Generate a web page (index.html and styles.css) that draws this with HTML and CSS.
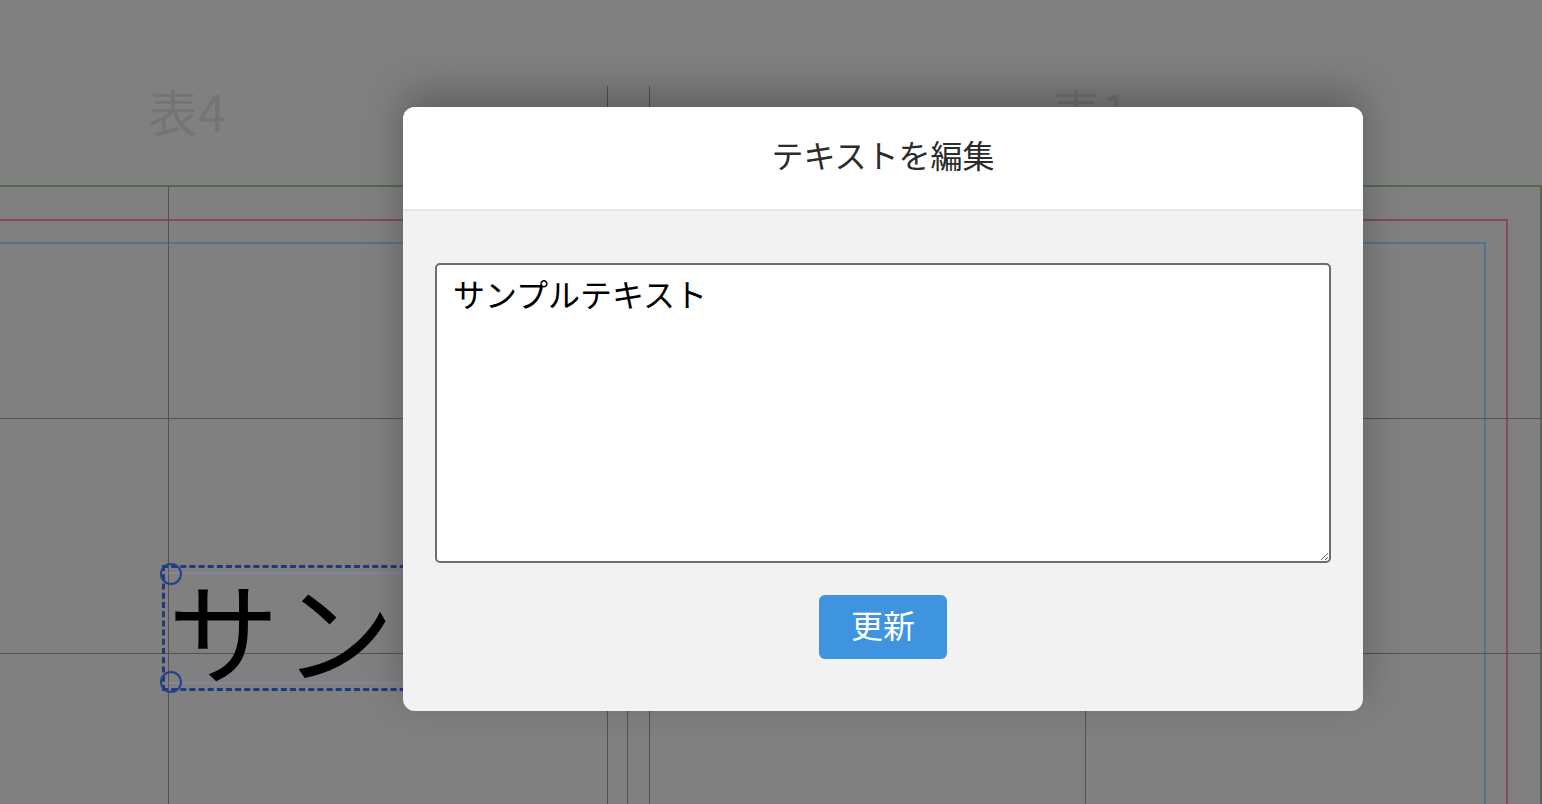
FILE: index.html
```html
<!DOCTYPE html>
<html lang="ja">
<head>
<meta charset="utf-8">
<title>テキストを編集</title>
<link rel="stylesheet" href="styles.css">
</head>
<body>
<div class="stage">
  <div class="canvas">
    <div class="label label-back">表4</div>
    <div class="label label-front">表1</div>

    <div class="guide guide-bleed"></div>
    <div class="guide guide-trim"></div>
    <div class="guide guide-safe"></div>

    <div class="vline vline-a"></div>
    <div class="vline vline-b"></div>
    <div class="vline vline-c"></div>
    <div class="vline vline-d"></div>
    <div class="vline vline-e"></div>
    <div class="hline hline-a"></div>
    <div class="hline hline-b"></div>

    <div class="selection">
      <div class="selection-inner"></div>
      <div class="sel-text">サンプルテキスト</div>
    </div>
    <div class="handle handle-top"></div>
    <div class="handle handle-bottom"></div>
  </div>

  <div class="overlay">
    <div class="modal">
      <div class="modal-header">
        <h2 class="modal-title">テキストを編集</h2>
      </div>
      <div class="modal-body">
        <textarea class="text-input">サンプルテキスト</textarea>
        <button class="btn-update" type="button">更新</button>
      </div>
    </div>
  </div>
</div>
</body>
</html>
```

FILE: styles.css
```css
* {
  box-sizing: border-box;
}

html, body {
  margin: 0;
  padding: 0;
  width: 100%;
  height: 100%;
  overflow: hidden;
}

body {
  font-family: "Noto Sans CJK JP", "Noto Sans", sans-serif;
  background: #808080;
}

.stage {
  position: relative;
  width: 1542px;
  height: 804px;
  overflow: hidden;
}

/* ---------- canvas (dimmed design surface) ---------- */
.canvas {
  position: absolute;
  inset: 0;
  background: #808080;
}

.label {
  position: absolute;
  top: 78px;
  font-size: 50px;
  line-height: 1.3;
  color: #747474;
  white-space: nowrap;
}

.label-back {
  left: 148px;
}

.label-front {
  left: 1051px;
}

.guide {
  position: absolute;
  left: -10px;
  height: 800px;
  border-top: 2px solid;
  border-right: 2px solid;
}

.guide-bleed {
  top: 185px;
  width: 1552px;
  border-color: #4f6b50;
}

.guide-trim {
  top: 219px;
  width: 1518px;
  border-color: #824865;
}

.guide-safe {
  top: 242px;
  width: 1496px;
  border-color: #567293;
}

.vline {
  position: absolute;
  width: 1px;
  bottom: 0;
  background: #525252;
}

.vline-a { left: 607px; top: 86px; }
.vline-b { left: 649px; top: 86px; }
.vline-c { left: 627px; top: 186px; }
.vline-d { left: 168px; top: 186px; }
.vline-e { left: 1085px; top: 186px; }

.hline {
  position: absolute;
  left: 0;
  width: 1541px;
  height: 1px;
  background: #525252;
}

.hline-a { top: 418px; }
.hline-b { top: 653px; }

.selection {
  position: absolute;
  left: 162px;
  top: 565px;
  width: 262px;
  height: 126px;
  border: 3px dashed #20397f;
  border-right: none;
  overflow: hidden;
}

.selection-inner {
  position: absolute;
  left: 3px;
  right: 0;
  top: 4px;
  bottom: 4px;
  border-top: 2px solid rgba(130, 150, 200, 0.35);
  border-bottom: 2px solid rgba(130, 150, 200, 0.35);
}

.sel-text {
  position: absolute;
  left: 3px;
  top: 4px;
  font-size: 111px;
  line-height: 1;
  letter-spacing: 4px;
  color: #000;
  white-space: nowrap;
}

.handle {
  position: absolute;
  left: 160px;
  width: 22px;
  height: 22px;
  border: 2px solid #24408d;
  border-radius: 50%;
}

.handle-top { top: 563px; }
.handle-bottom { top: 671px; }

/* ---------- modal ---------- */
.overlay {
  position: absolute;
  inset: 0;
  display: flex;
  align-items: flex-start;
  justify-content: flex-start;
  padding: 107px 0 0 403px;
}

.modal {
  width: 960px;
  border-radius: 12px;
  overflow: hidden;
  background: #f2f2f2;
  box-shadow: 0 -14px 40px rgba(0, 0, 0, 0.28);
}

.modal-header {
  background: #ffffff;
  border-bottom: 2px solid #e6e6e6;
  padding: 23px 0 31px;
  text-align: center;
}

.modal-title {
  margin: 0;
  font-size: 32px;
  line-height: 48px;
  font-weight: 400;
  color: #2b2b2b;
}

.modal-body {
  display: flex;
  flex-direction: column;
  align-items: center;
  gap: 32px;
  padding: 52px 32px 52px;
}

.text-input {
  display: block;
  width: 100%;
  height: 300px;
  margin: 0;
  padding: 6px 16px;
  border: 2px solid #6d6d6d;
  border-radius: 5px;
  background: #ffffff;
  font-family: "Noto Sans CJK JP", "Noto Sans", sans-serif;
  font-size: 32px;
  line-height: 1.4;
  color: #000;
  resize: both;
  outline: none;
}

.btn-update {
  width: 128px;
  height: 64px;
  margin: 0;
  padding: 0 0 6px;
  border: none;
  border-radius: 6px;
  background: #3f94e0;
  color: #ffffff;
  font-family: "Noto Sans CJK JP", "Noto Sans", sans-serif;
  font-size: 32px;
  line-height: 1;
  cursor: pointer;
}
```
